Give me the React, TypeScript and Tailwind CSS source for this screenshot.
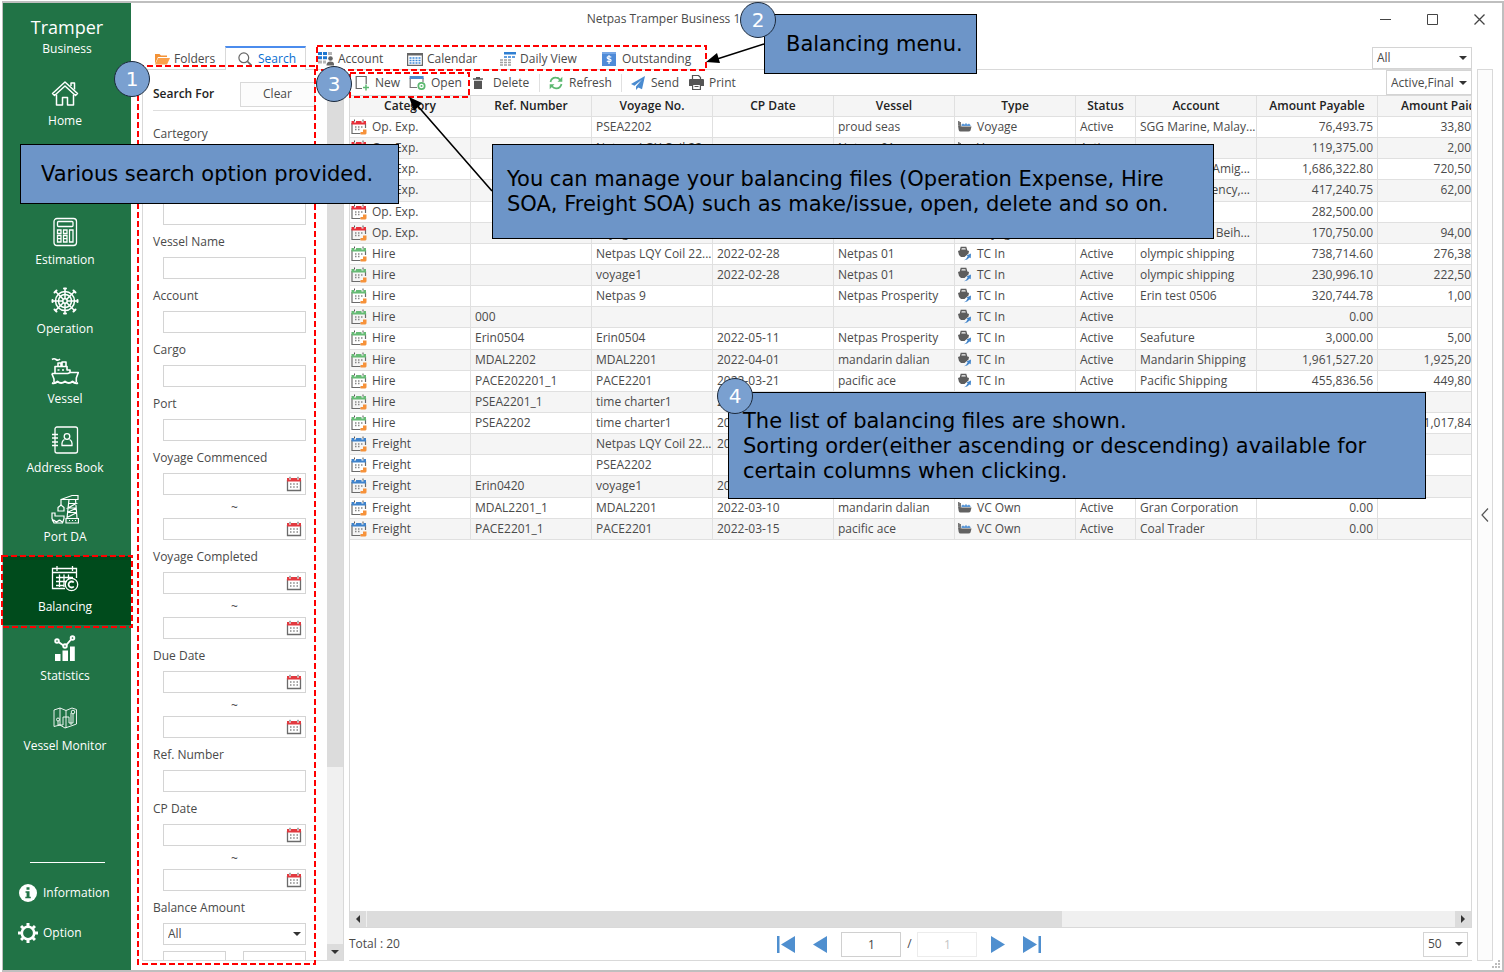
import React from "react";

type IconProps = { className?: string };

const HomeIcon = () => (
  <svg viewBox="0 0 28 28" className="size-7" fill="none" stroke="white" strokeWidth="1.5" strokeLinejoin="round">
    <path d="M1.5 14.5 14 3l12.5 11.5-2 2L14 7 3.5 16.5z" />
    <path d="M20 7V4h3.5v6.5M5.500 15.500V26h6v-7.500h5V26h6V15.500" />
  </svg>
);

const CalculatorIcon = () => (
  <svg viewBox="0 0 28 30" className="h-[30px] w-7" fill="none" stroke="white" strokeWidth="1.3">
    <rect x="3" y="1.5" width="22.5" height="27" rx="3" />
    <rect x="6.5" y="4.5" width="15.5" height="5" rx="1" />
    <path d="M6.500 13h3.500v3.500H6.500zM12.500 13H16v3.500h-3.500zM6.500 18.500h3.500V25H6.500zM12.500 18.500H16V25h-3.500zM18.500 13H22v12h-3.500zM6.500 21.700h3.500M12.500 21.700H16" />
  </svg>
);

const HelmIcon = () => (
  <svg viewBox="0 0 28 28" className="size-7" fill="none" stroke="white" strokeWidth="1.5">
    <circle cx="14" cy="14" r="9.5" />
    <circle cx="14" cy="14" r="6.5" />
    <circle cx="14" cy="14" r="2.2" />
    <path d="M14 1v11M14 16v11M1 14h11M16 14h11M4.800 4.800l7.700 7.700M15.500 15.500l7.700 7.700M23.200 4.800l-7.700 7.700M12.500 15.500l-7.700 7.700" />
    <path strokeWidth="2" strokeLinecap="round" d="M13 1.500h2M13 26.500h2M1.500 13v2M26.500 13v2M3.500 5.500l2-2M22.500 3.500l2 2M3.500 22.500l2 2M22.500 24.500l2-2" />
  </svg>
);

const ShipIcon = () => (
  <svg viewBox="0 0 28 28" className="size-7" fill="none" stroke="white" strokeWidth="1.6" strokeLinejoin="round">
    <path d="M1 2.500q2-1.500 4 0t4-.5M7 9V6h3v3M11 9V5h4v4M4 16V9.500h12V13h3v3" />
    <path d="M.8 16.500h16l2.500-1h8l-2 5.500v4M.8 16.500 3 22v3M6.500 13h2M11 13h2" />
    <path strokeWidth="2" d="M1 26q3 1 5.500-1.500Q10 27.500 14 24.500q4 3 7.500 0Q24 27 27 26" />
  </svg>
);

const AddressIcon = () => (
  <svg viewBox="0 0 28 28" className="size-7" fill="none" stroke="white" strokeWidth="1.3">
    <rect x="4" y="1" width="22.500" height="26" rx="2" />
    <path d="M1 8.500h6M1 12h6M1 16h6M1 19.500h6" />
    <circle cx="16" cy="10.500" r="2.800" />
    <path d="M13.500 13.500q-3 1.500-2.500 6h10q.5-4.500-2.500-6" />
  </svg>
);

const CraneIcon = () => (
  <svg viewBox="0 0 28 30" className="h-[30px] w-7" fill="none" stroke="white" strokeWidth="1.2">
    <path d="M10 5.500 21 1.500h6v4H10v6M18 5.500 16 24M24.500 5.500 26 24M17.500 9.500h7.500L17 14h8.500L16.500 18.500H26L16 23.500" />
    <path d="M7 13.500 10 11l3 2.500V17H7zM15 24.500h12.500V29H15zM18 26.500h1M21 26.500h1M24 26.500h1" />
    <path d="M1 19h3v3h9v2.500l-1.500 4.500H3L1 24.500zM1 27q1.500-1.500 3 0t3 0 3 0 2.500 0" />
  </svg>
);

const BalanceIcon = () => (
  <svg viewBox="0 0 28 28" className="size-7" fill="none" stroke="white" strokeWidth="1.3">
    <path d="M14 23.500H1.500v-20h24V13M1.500 7.500h24M6 1v5M21.500 1v5M5 12.500h17M5 16.500h11M5 20.500h8.500M8.500 9.500V22M13 9.500V22M17.500 9.500V14" />
    <circle cx="20.500" cy="19.500" r="6.200" />
    <path strokeWidth="1.800" d="M22.800 17.500a3 3 0 1 0 0 4" />
  </svg>
);

const StatsIcon = () => (
  <svg viewBox="0 0 24 28" className="h-7 w-6">
    <path fill="white" d="M2 20h5.500v7H2zM9.500 16.500H15V27H9.500zM17 12.500h4.800V27H17z" />
    <g fill="none" stroke="white" strokeWidth="1.900">
      <path d="m5.500 8 5 3.500M13.300 11l4.700-5.500" />
      <circle cx="4" cy="7" r="1.800" />
      <circle cx="12" cy="12" r="1.800" />
      <circle cx="19.500" cy="4" r="1.800" />
    </g>
  </svg>
);

const MapIcon = () => (
  <svg viewBox="0 0 28 24" className="h-6 w-7" fill="none" stroke="white" strokeWidth="0.900">
    <path d="m3 4 6-2 6 2.500L21 2l4.500 1.500v14.500L20 20l-6 2-5-3-6 1.500zM9 2v17M15 4.500V22M20 7v12" />
    <circle cx="7" cy="13.500" r="1.500" />
    <circle cx="22" cy="6" r="1.800" />
    <path d="M7 15v4h5v-8h6v6h4V8" />
  </svg>
);

const CalendarIcon = ({ tone }: { tone: "red" | "green" | "blue" }) => {
  const top = tone === "red" ? "#e8303a" : tone === "green" ? "#66bb75" : "#3f83cc";
  return (
    <svg viewBox="0 0 16 16" className="size-4 shrink-0">
      <path d="M1 4v10.500h8.500M14.500 4v5" fill="none" stroke="#6b6b6b" strokeWidth="1.200" />
      <path d="M.5 2H3v1.500h2V2h5.500v1.500h2V2H15v3.500H.5z" fill={top} />
      <path d="M3.500.5v2M12 .5v2" stroke="#555" />
      <path d="M4 8h1.500M7 8h1.500M10 8h1.500M4 10.500h1.500M7 10.500h1.500" stroke="#888" strokeWidth="1.300" />
      <path d="M9.500 13h2.500v-2.500h3.500v4l-1 1h-5z" fill="#f6923a" />
    </svg>
  );
};

const DateIcon = () => (
  <svg viewBox="0 0 16 16" className="size-4">
    <path d="M1.500 4v10.500h13V4" fill="none" stroke="#6b6b6b" strokeWidth="1.300" />
    <path d="M1 2h2v1.500h2V2h6v1.500h2V2h2v3.500H1z" fill="#e23a40" />
    <path d="M4 .8v2M12 .8v2" stroke="#555" />
    <path d="M4 8h1.500M7.200 8h1.500M10.500 8H12M4 11h1.500M7.200 11h1.500M10.500 11H12" stroke="#888" strokeWidth="1.300" />
  </svg>
);

const BulkIcon = () => (
  <svg viewBox="0 0 16 14" className="h-[14px] w-4 shrink-0">
    <path d="M1 5.500 5 6.500h9.500l-1 4q-.5 1-2 1h-8q-1.500 0-1.800-1.500z" fill="#626262" />
    <path d="M1 1h1.500v1H4v4.300L1 5.600z" fill="#777" />
    <path d="M4.500 6V4.500L6 3.500 7.500 4.500 9 3l1.500 1.500L12 3.500l1.500 1.500V6z" fill="#5b97d6" />
  </svg>
);

const TcIcon = () => (
  <svg viewBox="0 0 16 16" className="size-4 shrink-0">
    <path d="M3.500 4.500 4.200 1.500h4.600l.9 3" fill="none" stroke="#5d5d5d" strokeWidth="1.300" />
    <path d="M1 5 3 4.300V3.500h7v.8L12 5l-.5 2.500L7.500 11H4L2 9z" fill="#5d5d5d" />
    <path d="M7 14.300q2.500-1 3.700-4L9.500 9.500 14 7.500l-.3 4.700-1.200-.7Q10.500 14 7 14.300z" fill="#4285cb" />
  </svg>
);

const AccountIcon = () => (
  <svg viewBox="0 0 16 14" className="h-[14px] w-4">
    <path d="M0 0h4v3H0zM5 0h4v3H5zM0 4.200h4v3H0zM5 4.200h4v3H5z" fill="#1f78d1" />
    <path d="M10 0h4v3h-4zM0 8.500h4v3H0zM5 8.500h3v3H5z" fill="#b5b5b5" />
    <circle cx="12.500" cy="6.500" r="2.300" fill="#666" />
    <path d="M8.500 13.500q0-4 4-4t3.500 4z" fill="#666" />
  </svg>
);

const GridCalendarIcon = () => (
  <svg viewBox="0 0 16 14" className="h-[14px] w-4">
    <path d="M.6 1.500h14.800v11.900H.6z" fill="none" stroke="#666" strokeWidth="1.200" />
    <path d="M0 1h16v2.500H0z" fill="#666" />
    <path d="M2.500 6H14M2.500 8.500H14M2.500 11H14" stroke="#3c88d6" strokeWidth="1.600" strokeDasharray="2 1" />
  </svg>
);

const DailyIcon = () => (
  <svg viewBox="0 0 16 14" className="h-[14px] w-4">
    <path d="M4 0h12v2.500H4z" fill="#2f7fd2" />
    <path d="M4 5h3M8 5h3M12 5h3" stroke="#2f7fd2" strokeWidth="1.500" />
    <path d="M0 8h3M4 8h3M8 8h3M0 10.500h3M4 10.500h3M8 10.500h3M0 13h3M4 13h3M8 13h3" stroke="#a0a0a0" strokeWidth="1.300" />
  </svg>
);

const DollarIcon = () => (
  <svg viewBox="0 0 14 14" className="size-[14px]">
    <path d="M0 0h14v14H0z" fill="#4f8bd8" />
    <path d="M0 0h14v2H0z" fill="#77a7e6" />
    <path d="M9.300 5.200Q7 3.800 5.300 5q-.6 1.600 1.700 2 2.500.5 2 2-1.700 1.300-4.200 0M7 3v9" fill="none" stroke="white" strokeWidth="1.100" />
  </svg>
);

const FolderIcon = () => (
  <svg viewBox="0 0 16 12" className="h-3 w-4">
    <path d="M1 11V1h4.500L7 2.500h6V4H4z" fill="#f39236" />
    <path d="M4.200 5H16l-3 6.500H1z" fill="#fba04a" />
  </svg>
);

const SearchIcon = () => (
  <svg viewBox="0 0 14 14" className="size-[14px]" fill="none" stroke="#666" strokeWidth="1.200">
    <circle cx="5.800" cy="5.800" r="4.900" />
    <path strokeWidth="1.700" d="m9.500 9.500 4 4" />
  </svg>
);

const NewIcon = () => (
  <svg viewBox="0 0 14 16" className="h-4 w-[14px]" fill="none">
    <path d="M7 13.500H1.200v-12h10V9" stroke="#666" strokeWidth="1.200" />
    <path d="M11 9.500v6M8 12.500h6" stroke="#5cb870" strokeWidth="1.500" />
  </svg>
);

const OpenIcon = () => (
  <svg viewBox="0 0 17 16" className="h-4 w-[17px]" fill="none">
    <path d="M8 12.500H1.200V3M14 3v4" stroke="#777" strokeWidth="1.200" />
    <path d="M.6 1h14v3H.6z" fill="#4a8bd0" />
    <circle cx="12.500" cy="11" r="3.200" stroke="#5cb870" strokeWidth="1.700" />
    <circle cx="12.500" cy="11" r="1" fill="#5cb870" />
  </svg>
);

const TrashIcon = () => (
  <svg viewBox="0 0 10 12" className="h-3 w-[10px]">
    <path d="M0 1.200h3V0h4v1.200h3v1.600H0zM1 3.800h8V12H1z" fill="#555" />
  </svg>
);

const RefreshIcon = () => (
  <svg viewBox="0 0 14 14" className="size-[14px]">
    <path d="M1.500 6Q2.500 1.500 7 1.700q2.500 0 4 2M12.500 8q-1 4.500-5.500 4.300-2.500 0-4-2" fill="none" stroke="#5cb870" strokeWidth="1.700" />
    <path d="M13.300.8v5H8.500zM.7 13.200v-5h4.800z" fill="#5cb870" />
  </svg>
);

const SendIcon = () => (
  <svg viewBox="0 0 14 14" className="size-[14px]">
    <path d="M14 0 0 8l3.500 1.800L11 3.500 5 10.500V14l2.300-2.600 3.700 1.800z" fill="#4a8bd0" />
  </svg>
);

const PrintIcon = () => (
  <svg viewBox="0 0 15 15" className="size-[15px]">
    <path d="M3.500 4.500v-4h6l2 2v2" fill="none" stroke="#555" strokeWidth="1.200" />
    <path d="M0 5q0-1 1-1h13q1 0 1 1v6h-3V9H3v2H0z" fill="#555" />
    <path d="M3.600 9.500h7.800v5H3.600zM5.500 11.500h4" fill="white" stroke="#555" strokeWidth="1.200" />
  </svg>
);

const InfoIcon = () => (
  <svg viewBox="0 0 18 18" className="size-[18px]">
    <circle cx="9" cy="9" r="9" fill="white" />
    <path d="M7.500 3.200h3v2.600h-3zM6.500 7.200h4v5.500h1.300v1.600H6.300v-1.600h1.300V8.800H6.500z" fill="#217346" />
  </svg>
);

const GearIcon = () => (
  <svg viewBox="0 0 20 20" className="size-5">
    <path d="M8.500 0h3v3h-3zM8.500 17h3v3h-3zM0 8.500h3v3H0zM17 8.500h3v3h-3zM2 4.100 4.100 2l2.200 2.200-2.100 2.100zM13.700 15.800l2.100-2.100L18 15.900 15.900 18zM15.900 2 18 4.100l-2.200 2.200-2.100-2.100zM4.200 13.700l2.100 2.100L4.100 18 2 15.900z" fill="white" />
    <circle cx="10" cy="10" r="6.200" fill="none" stroke="white" strokeWidth="2.600" />
  </svg>
);

const Caret = ({ className = "" }: IconProps) => (
  <svg viewBox="0 0 8 4" className={"pointer-events-none h-1 w-2 " + className}>
    <path d="M0 0h8L4 4z" fill="#333" />
  </svg>
);

const navItems: { label: string; icon: React.ReactNode; active?: boolean }[] = [
  { label: "Home", icon: <HomeIcon /> },
  { label: "", icon: null },
  { label: "Estimation", icon: <CalculatorIcon /> },
  { label: "Operation", icon: <HelmIcon /> },
  { label: "Vessel", icon: <ShipIcon /> },
  { label: "Address Book", icon: <AddressIcon /> },
  { label: "Port DA", icon: <CraneIcon /> },
  { label: "Balancing", icon: <BalanceIcon />, active: true },
  { label: "Statistics", icon: <StatsIcon /> },
  { label: "Vessel Monitor", icon: <MapIcon /> },
];

function Sidebar() {
  return (
    <aside className="flex w-32 shrink-0 flex-col bg-[#217346] text-white">
      <div className="flex h-[67px] shrink-0 flex-col items-center pt-2.5">
        <span className="text-lg leading-7">Tramper</span>
        <span className="text-xs leading-4">Business</span>
      </div>
      <nav className="grid h-[694px] shrink-0 grid-rows-10">
        {navItems.map((item, i) =>
          item.label ? (
            <button
              key={i}
              type="button"
              className={"flex flex-col items-center pt-2 pr-1 " + (item.active ? "bg-[#004b1c]" : "")}
            >
              <span className="flex h-[30px] items-center">{item.icon}</span>
              <span className="mt-[5px] text-xs leading-4 whitespace-nowrap">{item.label}</span>
            </button>
          ) : (
            <div key={i} />
          ),
        )}
      </nav>
      <div className="mx-auto mt-auto h-px w-[75px] shrink-0 bg-white" />
      <div className="flex flex-col gap-5 pt-5 pb-[27px] pl-[15px] text-xs">
        <button type="button" className="flex h-5 items-center gap-[5px]">
          <span className="flex w-5 justify-center"><InfoIcon /></span>Information
        </button>
        <button type="button" className="flex h-5 items-center gap-[5px]">
          <GearIcon />Option
        </button>
      </div>
    </aside>
  );
}

function TextField({ label, id }: { label: string; id: string }) {
  return (
    <div className="h-[54px]">
      <label htmlFor={id} className="block h-[17px] leading-[18px]">{label}</label>
      <input id={id} className="mt-[7px] ml-2.5 h-[22px] w-[143px] border border-[#d4d4d4] bg-white px-1" />
    </div>
  );
}

function DateField({ label, id }: { label: string; id: string }) {
  const box = "flex h-[22px] w-[143px] items-center border border-[#d4d4d4] bg-white pr-[3px]";
  return (
    <div className="h-[99px]">
      <label htmlFor={id} className="block h-[17px] leading-[18px]">{label}</label>
      <div className="mt-[7px] ml-2.5 w-[143px]">
        <div className={box}>
          <input id={id} className="min-w-0 flex-1 px-1 outline-none" />
          <button type="button" aria-label={label + " from"}><DateIcon /></button>
        </div>
        <div className="h-[23px] pt-px text-center leading-6">~</div>
        <div className={box}>
          <input aria-label={label + " to"} className="min-w-0 flex-1 px-1 outline-none" />
          <button type="button" aria-label={label + " until"}><DateIcon /></button>
        </div>
      </div>
    </div>
  );
}

function SelectBox({ label, value, className }: { label: string; value: string; className: string }) {
  return (
    <div className={"relative flex items-center border border-[#d4d4d4] bg-white " + className}>
      <select aria-label={label} defaultValue={value} className="h-full w-full appearance-none bg-transparent px-1 outline-none">
        <option>{value}</option>
      </select>
      <Caret className="absolute right-1" />
    </div>
  );
}

function SearchPanel() {
  return (
    <section className="flex w-[202px] shrink-0 border border-[#d9d9d9]">
      <div className="min-w-0 flex-1 overflow-hidden pl-[10px]">
        <div className="mr-3 flex h-[41px] items-center justify-between border-b border-[#dedede] pt-3 pb-1">
          <h2 className="font-semibold text-[#222]">Search For</h2>
          <button type="button" className="h-[25px] w-[75px] border border-[#d9d9d9] bg-[#fcfcfc]">Clear</button>
        </div>
        <div className="pt-[14px]">
          <TextField label="Cartegory" id="category" />
          <div className="h-[54px] pt-6">
            <input aria-label="Search value" className="ml-2.5 h-[22px] w-[143px] border border-[#d4d4d4]" />
          </div>
          <TextField label="Vessel Name" id="vessel" />
          <TextField label="Account" id="account" />
          <TextField label="Cargo" id="cargo" />
          <TextField label="Port" id="port" />
          <DateField label="Voyage Commenced" id="commenced" />
          <DateField label="Voyage Completed" id="completed" />
          <DateField label="Due Date" id="due" />
          <TextField label="Ref. Number" id="ref" />
          <DateField label="CP Date" id="cp" />
          <div className="h-[17px] leading-[18px]">Balance Amount</div>
          <SelectBox label="Balance Amount" value="All" className="mt-[7px] ml-2.5 h-[22px] w-[143px]" />
          <div className="mt-1.5 ml-2.5 flex w-[143px] justify-between">
            <input aria-label="Minimum amount" className="h-[22px] w-[63px] border border-[#d4d4d4]" />
            <input aria-label="Maximum amount" className="h-[22px] w-[63px] border border-[#d4d4d4]" />
          </div>
        </div>
      </div>
      <div className="flex w-4 shrink-0 flex-col bg-[#f0f0f0]">
        <div className="h-[697px] bg-[#dcdcdc]" />
        <div className="flex-1" />
        <button type="button" aria-label="Scroll down" className="flex h-4 items-center justify-center bg-[#dcdcdc]">
          <Caret />
        </button>
      </div>
    </section>
  );
}

type Row = [string, string, string, string, string, string, string, string, string, string];
const rows: Row[] = [
  ["Op. Exp.", "", "PSEA2202", "", "proud seas", "Voyage", "Active", "SGG Marine, Malay...", "76,493.75", "33,80"],
  ["Op. Exp.", "", "Netpas LQY Coil 22...", "", "Netpas 01", "Voyage", "Active", "", "119,375.00", "2,00"],
  ["Op. Exp.", "", "", "", "", "", "", "Amig...", "1,686,322.80", "720,50"],
  ["Op. Exp.", "", "", "", "", "", "", "ency,...", "417,240.75", "62,00"],
  ["Op. Exp.", "", "", "", "", "", "", "", "282,500.00", ""],
  ["Op. Exp.", "", "voyage1", "", "", "Voyage", "", "Beih...", "170,750.00", "94,00"],
  ["Hire", "", "Netpas LQY Coil 22...", "2022-02-28", "Netpas 01", "TC In", "Active", "olympic shipping", "738,714.60", "276,38"],
  ["Hire", "", "voyage1", "2022-02-28", "Netpas 01", "TC In", "Active", "olympic shipping", "230,996.10", "222,50"],
  ["Hire", "", "Netpas 9", "", "Netpas Prosperity", "TC In", "Active", "Erin test 0506", "320,744.78", "1,00"],
  ["Hire", "000", "", "", "", "TC In", "Active", "", "0.00", ""],
  ["Hire", "Erin0504", "Erin0504", "2022-05-11", "Netpas Prosperity", "TC In", "Active", "Seafuture", "3,000.00", "5,00"],
  ["Hire", "MDAL2202", "MDAL2201", "2022-04-01", "mandarin dalian", "TC In", "Active", "Mandarin Shipping", "1,961,527.20", "1,925,20"],
  ["Hire", "PACE202201_1", "PACE2201", "2022-03-21", "pacific ace", "TC In", "Active", "Pacific Shipping", "455,836.56", "449,80"],
  ["Hire", "PSEA2201_1", "time charter1", "20", "", "", "", "", "", ""],
  ["Hire", "PSEA2202", "time charter1", "20", "", "", "", "", "", "1,017,84"],
  ["Freight", "", "Netpas LQY Coil 22...", "20", "", "", "", "", "", ""],
  ["Freight", "", "PSEA2202", "", "", "", "", "", "", ""],
  ["Freight", "Erin0420", "voyage1", "20", "", "", "", "", "", ""],
  ["Freight", "MDAL2201_1", "MDAL2201", "2022-03-10", "mandarin dalian", "VC Own", "Active", "Gran Corporation", "0.00", ""],
  ["Freight", "PACE2201_1", "PACE2201", "2022-03-15", "pacific ace", "VC Own", "Active", "Coal Trader", "0.00", ""],
];

const headers = ["Category", "Ref. Number", "Voyage No.", "CP Date", "Vessel", "Type", "Status", "Account", "Amount Payable"];

function BalancingTable() {
  const cell = "overflow-hidden whitespace-nowrap border-r border-b border-[#e0e0e0] p-0 ";
  return (
    <table className="h-[444px] w-full table-fixed border-separate border-spacing-0 leading-4">
      <colgroup>
        <col className="w-[121px]" />
        <col className="w-[121px]" />
        <col className="w-[121px]" />
        <col className="w-[121px]" />
        <col className="w-[121px]" />
        <col className="w-[121px]" />
        <col className="w-[60px]" />
        <col className="w-[121px]" />
        <col className="w-[121px]" />
        <col />
      </colgroup>
      <thead>
        <tr className="h-[21px] bg-[#f5f5f5] text-[#222]">
          {headers.map((h) => (
            <th key={h} className={cell + "text-center font-semibold"}>{h}</th>
          ))}
          <th className="overflow-hidden border-b border-[#e0e0e0] p-0 pl-[23px] text-left font-semibold whitespace-nowrap">Amount Paid</th>
        </tr>
      </thead>
      <tbody>
        {rows.map((r, i) => (
          <tr key={i} className={i % 2 ? "bg-[#f5f5f5]" : "bg-white"}>
            <td className={cell}>
              <span className="flex items-center gap-[5px] pl-px">
                <CalendarIcon tone={r[0] === "Hire" ? "green" : r[0] === "Freight" ? "blue" : "red"} />
                {r[0]}
              </span>
            </td>
            <td className={cell + "pl-1"}>{r[1]}</td>
            <td className={cell + "pl-1"}>{r[2]}</td>
            <td className={cell + "pl-1"}>{r[3]}</td>
            <td className={cell + "pl-1"}>{r[4]}</td>
            <td className={cell}>
              {r[5] && (
                <span className="flex items-center gap-1 pl-0.5">
                  {r[5] === "TC In" ? <TcIcon /> : <BulkIcon />}
                  {r[5]}
                </span>
              )}
            </td>
            <td className={cell + "pl-1"}>{r[6]}</td>
            <td className={cell + (i > 1 && i < 6 ? "pr-1.5 text-right" : "pl-1")}>{r[7]}</td>
            <td className={cell + "pr-1 text-right"}>{r[8]}</td>
            <td className="overflow-hidden border-b border-[#e0e0e0] p-0 text-right whitespace-nowrap">{r[9]}</td>
          </tr>
        ))}
      </tbody>
    </table>
  );
}

function Tool({ icon, text, className }: { icon: React.ReactNode; text: string; className: string }) {
  return (
    <button type="button" className={"flex h-full shrink-0 items-center whitespace-nowrap " + className}>
      <span className="flex w-5 shrink-0 items-center">{icon}</span>
      {text}
    </button>
  );
}

function Pager() {
  const num = "h-[25px] w-[60px] border bg-white text-center outline-none ";
  return (
    <div className="flex h-8 shrink-0 items-center justify-between pr-1">
      <span>Total : 20</span>
      <div className="flex items-center gap-[14px] pr-[4px]">
        <button type="button" aria-label="First page" className="mr-1">
          <svg viewBox="0 0 18 17" className="h-[17px] w-[18px]"><path d="M0 0h2.500v17H0zM18 0v17L4 8.500z" fill="#4f8fcf" /></svg>
        </button>
        <button type="button" aria-label="Previous page">
          <svg viewBox="0 0 14 17" className="h-[17px] w-[14px]"><path d="M14 0v17L0 8.500z" fill="#4f8fcf" /></svg>
        </button>
        <div className="flex items-center">
          <input aria-label="Page" defaultValue="1" className={num + "border-[#d0d0d0] text-[#444]"} />
          <span className="w-4 text-center">/</span>
          <input aria-label="Page count" defaultValue="1" readOnly className={num + "border-[#ececec] text-[#c4c4c4]"} />
        </div>
        <button type="button" aria-label="Next page">
          <svg viewBox="0 0 14 17" className="h-[17px] w-[14px]"><path d="M0 0v17l14-8.500z" fill="#4f8fcf" /></svg>
        </button>
        <button type="button" aria-label="Last page" className="ml-1">
          <svg viewBox="0 0 18 17" className="h-[17px] w-[18px]"><path d="M15.500 0H18v17h-2.500zM0 0v17l14-8.500z" fill="#4f8fcf" /></svg>
        </button>
      </div>
      <SelectBox label="Rows per page" value="50" className="h-[25px] w-[45px]" />
    </div>
  );
}

function MainPanel() {
  return (
    <main className="flex min-w-0 flex-1 flex-col border-t border-b border-[#d9d9d9]">
      <div className="flex h-[25px] shrink-0 items-center">
        <div className="flex h-full items-center pl-[6px]">
          <Tool icon={<NewIcon />} text="New" className="w-[54px]" />
          <Tool icon={<OpenIcon />} text="Open" className="w-[64px] gap-0.5" />
          <Tool icon={<TrashIcon />} text="Delete" className="w-[66px]" />
          <span className="h-[18px] w-px bg-[#e0e0e0]" />
          <Tool icon={<RefreshIcon />} text="Refresh" className="w-[81px] pl-[9px]" />
          <span className="h-[18px] w-px bg-[#e0e0e0]" />
          <Tool icon={<SendIcon />} text="Send" className="w-[67px] pl-[9px]" />
          <Tool icon={<PrintIcon />} text="Print" className="w-[50px]" />
        </div>
        <SelectBox label="Status filter" value="Active,Final" className="ml-auto h-[25px] w-[86px]" />
      </div>
      <div className="flex min-h-0 flex-1 flex-col border border-[#d9d9d9]">
        <div className="min-h-0 flex-1 overflow-hidden">
          <BalancingTable />
        </div>
        <div className="flex h-4 shrink-0 bg-[#f0f0f0]">
          <button type="button" aria-label="Scroll left" className="flex w-4 items-center justify-center bg-[#dcdcdc]">
            <svg viewBox="0 0 4 8" className="h-2 w-1"><path d="M4 0v8L0 4z" fill="#333" /></svg>
          </button>
          <div className="ml-px w-[62%] bg-[#dcdcdc]" />
          <button type="button" aria-label="Scroll right" className="ml-auto flex w-4 items-center justify-center bg-[#dcdcdc]">
            <svg viewBox="0 0 4 8" className="h-2 w-1"><path d="M0 0v8l4-4z" fill="#333" /></svg>
          </button>
        </div>
      </div>
      <Pager />
    </main>
  );
}

function Callout({ className, children }: { className: string; children: React.ReactNode }) {
  return (
    <div className={"absolute flex flex-col justify-center border border-black bg-[#6d95c8] pt-px font-['DejaVu_Sans',sans-serif] text-[21px] leading-[25px] whitespace-nowrap text-black " + className}>
      {children}
    </div>
  );
}

function Badge({ n, className }: { n: number; className: string }) {
  return (
    <div className={"absolute flex size-9 items-center justify-center rounded-full border border-[#1c2a3c] bg-[#7aa0d0] font-['DejaVu_Sans',sans-serif] text-xl leading-none text-white " + className}>
      {n}
    </div>
  );
}

function Annotations() {
  return (
    <div className="pointer-events-none absolute inset-0 overflow-hidden">
      <svg className="absolute top-0 left-0 h-[972px] w-[1504px]" viewBox="0 0 1504 972">
        <g fill="none" stroke="#ff0000" strokeWidth="2" strokeDasharray="6 3">
          <rect x="138" y="66" width="177" height="898" />
          <rect x="317" y="46" width="389" height="24" />
          <rect x="350" y="73" width="119" height="24" />
          <rect x="2" y="556" width="130" height="71" />
        </g>
        <path d="m764 44-50 16M492 191l-76-87" stroke="black" strokeWidth="1.600" />
        <path d="m706 62 11-9 3 10zM409 97l13 6-8 8z" fill="black" />
      </svg>
      <Callout className="top-[144px] left-[20px] h-[60px] w-[379px] pl-5">Various search option provided.</Callout>
      <Callout className="top-[14px] left-[764px] h-[60px] w-[213px] pl-[21px]">Balancing menu.</Callout>
      <Callout className="top-[144px] left-[492px] h-[95px] w-[722px] pl-[14px]">
        <span>You can manage your balancing files (Operation Expense, Hire</span>
        <span>SOA, Freight SOA) such as make/issue, open, delete and so on.</span>
      </Callout>
      <Callout className="top-[392px] left-[728px] h-[107px] w-[698px] pl-[14px]">
        <span>The list of balancing files are shown.</span>
        <span>Sorting order(either ascending or descending) available for</span>
        <span>certain columns when clicking.</span>
      </Callout>
      <Badge n={1} className="top-[61px] left-[114px]" />
      <Badge n={2} className="top-[2px] left-[740px]" />
      <Badge n={3} className="top-[66px] left-[316px]" />
      <Badge n={4} className="top-[378px] left-[717px]" />
    </div>
  );
}

export default function App() {
  return (
    <div className="relative flex h-screen bg-white pt-px pl-0.5 font-['Open_Sans','Noto_Sans',sans-serif] text-xs text-[#4a4a4a]">
      <div className="flex min-w-0 flex-1 overflow-hidden border-2 border-l border-[#bfbfbf]">
        <Sidebar />
        <div className="flex min-w-0 flex-1 flex-col pb-[9px] pl-[11px]">
          <header className="grid h-8 shrink-0 grid-cols-[1fr_auto_1fr] items-center pr-[17px]">
            <span />
            <h1 className="pr-[290px]">Netpas Tramper Business 1.0</h1>
            <div className="flex items-center justify-end gap-9 text-[#333]">
              <button type="button" aria-label="Minimize"><svg viewBox="0 0 11 11" className="size-[11px]"><path d="M0 5.500h11" stroke="#444" /></svg></button>
              <button type="button" aria-label="Maximize"><svg viewBox="0 0 11 11" className="size-[11px]"><path d="M.5.500h10v10H.5z" fill="none" stroke="#444" /></svg></button>
              <button type="button" aria-label="Close"><svg viewBox="0 0 11 11" className="size-[11px]"><path d="m.5.500 10 10m0-10-10 10" stroke="#444" strokeWidth="1.300" /></svg></button>
            </div>
          </header>
          <div className="mt-[11px] flex h-[23px] shrink-0 items-stretch pr-[30px]">
            <button type="button" className="flex w-[83px] items-center gap-1 pt-0.5 pl-3"><FolderIcon />Folders</button>
            <button type="button" className="relative -mb-px flex w-[81px] items-center gap-[6px] border-x border-t-2 border-x-[#d9d9d9] border-t-[#4b8ced] bg-white pl-3 text-[#0a6ed1]">
              <SearchIcon />Search
            </button>
            <div className="flex pt-0.5 pl-3">
              <Tool icon={<AccountIcon />} text="Account" className="w-[89px]" />
              <Tool icon={<GridCalendarIcon />} text="Calendar" className="w-[93px]" />
              <Tool icon={<DailyIcon />} text="Daily View" className="w-[102px]" />
              <Tool icon={<DollarIcon />} text="Outstanding" className="w-[90px]" />
            </div>
            <SelectBox label="Office filter" value="All" className="mt-px ml-auto w-[100px]" />
          </div>
          <div className="flex min-h-0 flex-1 pr-[9px]">
            <SearchPanel />
            <div className="w-[5px] shrink-0" />
            <MainPanel />
            <button type="button" aria-label="Expand side panel" className="ml-[5px] flex w-4 shrink-0 items-center justify-center border border-[#d9d9d9] bg-[#fcfcfc]">
              <svg viewBox="0 0 8 14" className="h-[14px] w-2"><path d="M7 .5 1 7l6 6.500" fill="none" stroke="#555" strokeWidth="1.200" /></svg>
            </button>
          </div>
        </div>
      </div>
      <svg viewBox="0 0 9 9" className="absolute right-[3px] bottom-[3px] size-[9px]">
        <path d="M6 0h2v2H6zM3 3h2v2H3zM6 3h2v2H6zM0 6h2v2H0zM3 6h2v2H3zM6 6h2v2H6z" fill="#bdbdbd" />
      </svg>
      <Annotations />
    </div>
  );
}
